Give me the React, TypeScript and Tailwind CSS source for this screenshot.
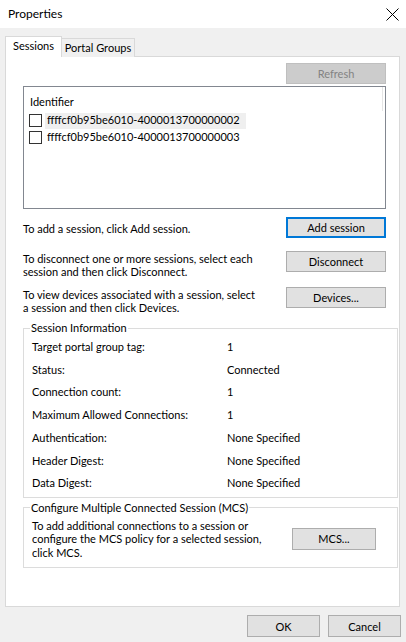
import React from 'react';

const font = "font-['Segoe_UI','Lato','Liberation_Sans',sans-serif]";

const Button: React.FC<{ label: string; className?: string; focused?: boolean; disabled?: boolean }> = ({
  label,
  className = '',
  focused,
  disabled,
}) => {
  let look = 'border border-[#adadad] bg-[#e1e1e1] text-black';
  if (focused) look = 'border-2 border-[#0078d7] bg-[#e1e1e1] text-black';
  if (disabled) look = 'border border-[#bfbfbf] bg-[#cccccc] text-[#838383]';
  return (
    <div className={`flex items-center justify-center leading-none shrink-0 ${look} ${className}`}>
      {label}
    </div>
  );
};

const Checkbox: React.FC = () => (
  <div className="w-[13px] h-[13px] border border-[#333333] bg-white shrink-0" />
);

const info: [string, string][] = [
  ['Target portal group tag:', '1'],
  ['Status:', 'Connected'],
  ['Connection count:', '1'],
  ['Maximum Allowed Connections:', '1'],
  ['Authentication:', 'None Specified'],
  ['Header Digest:', 'None Specified'],
  ['Data Digest:', 'None Specified'],
];

export default function App() {
  return (
    <div className={`w-[406px] h-[642px] bg-[#f0f0f0] flex flex-col text-black text-[11px] ${font}`}>
      {/* title bar */}
      <div className="h-[28px] bg-white flex items-center justify-between pl-[8px] pr-[7px] shrink-0">
        <span className="text-[12px]">Properties</span>
        <svg width="13" height="13" viewBox="0 0 13 13" className="mt-[1px]">
          <path d="M0.5 0.5 L12.5 12.5 M12.5 0.5 L0.5 12.5" stroke="#000" strokeWidth="1" />
        </svg>
      </div>

      {/* tabs */}
      <div className="flex items-end pl-[5px] mt-[8px] h-[21px] relative z-10 whitespace-nowrap">
        <div className="h-[21px] w-[57px] bg-white border border-b-0 border-[#d9d9d9] flex items-center justify-center pb-[2px]">
          Sessions
        </div>
        <div className="h-[19px] w-[73px] bg-[#f0f0f0] border border-l-0 border-b-0 border-[#d9d9d9] flex items-center justify-center">
          Portal Groups
        </div>
      </div>

      {/* panel */}
      <div className="mx-[5px] -mt-px w-[395px] h-[551px] bg-white border border-[#d9d9d9] flex flex-col pl-[17px] pr-[13px]">
        <div className="flex justify-end mt-[6px]">
          <Button label="Refresh" disabled className="w-[100px] h-[21px]" />
        </div>

        <div className="mt-[2px] h-[123px] border border-[#828790] flex flex-col shrink-0">
          <div className="flex h-[25px] shrink-0">
            <div className="flex-1 pl-[6px] pt-[7px]">Identifier</div>
            <div className="w-px h-[24px] bg-[#e5e5e5] mr-[2px]" />
          </div>
          <div className="flex items-center pl-[5px] h-[17px]">
            <Checkbox />
            <div className="ml-[3px] h-[16px] pl-[2px] pr-[6px] bg-[#efefef] flex items-center">
              ffffcf0b95be6010-4000013700000002
            </div>
          </div>
          <div className="flex items-center pl-[5px] h-[17px]">
            <Checkbox />
            <div className="ml-[3px] h-[16px] pl-[2px] flex items-center">ffffcf0b95be6010-4000013700000003</div>
          </div>
        </div>

        <div className="flex justify-between items-start mt-[8px]">
          <div className="pt-[5px] leading-[13px]">To add a session, click Add session.</div>
          <Button label="Add session" focused className="w-[100px] h-[21px]" />
        </div>

        <div className="flex justify-between items-start mt-[13px]">
          <div className="pt-[1px] leading-[13px]">
            To disconnect one or more sessions, select each
            <br />
            session and then click Disconnect.
          </div>
          <Button label="Disconnect" className="w-[100px] h-[21px]" />
        </div>

        <div className="flex justify-between items-start mt-[9px]">
          <div className="pt-[1px] leading-[13px]">
            To view devices associated with a session, select
            <br />
            a session and then click Devices.
          </div>
          <Button label="Devices..." className="w-[100px] h-[21px]" />
        </div>

        <fieldset className="mt-[7px] w-[375px] border border-[#dcdcdc] pl-[8px] pb-[2px]">
          <legend className="-ml-[2px] px-[1px] leading-[14px]">Session Information</legend>
          <div className="flex flex-col mt-[1px]">
            {info.map(([k, v]) => (
              <div key={k} className="flex items-center h-[22.7px]">
                <div className="w-[195px]">{k}</div>
                <div>{v}</div>
              </div>
            ))}
          </div>
        </fieldset>

        <fieldset className="mt-[3px] w-[375px] border border-[#dcdcdc] pl-[8px] pb-[8px]">
          <legend className="-ml-[2px] px-[1px] leading-[14px]">Configure Multiple Connected Session (MCS)</legend>
          <div className="flex items-start">
            <div className="leading-[13.5px] w-[260px] mt-[4px]">
              To add additional connections to a session or
              <br />
              configure the MCS policy for a selected session,
              <br />
              click MCS.
            </div>
            <Button label="MCS..." className="w-[84px] h-[22px] mt-[13px]" />
          </div>
        </fieldset>
      </div>

      {/* footer */}
      <div className="flex justify-end gap-[8px] pr-[5px] mt-[8px]">
        <Button label="OK" className="w-[73px] h-[22px]" />
        <Button label="Cancel" className="w-[73px] h-[22px]" />
      </div>
    </div>
  );
}
